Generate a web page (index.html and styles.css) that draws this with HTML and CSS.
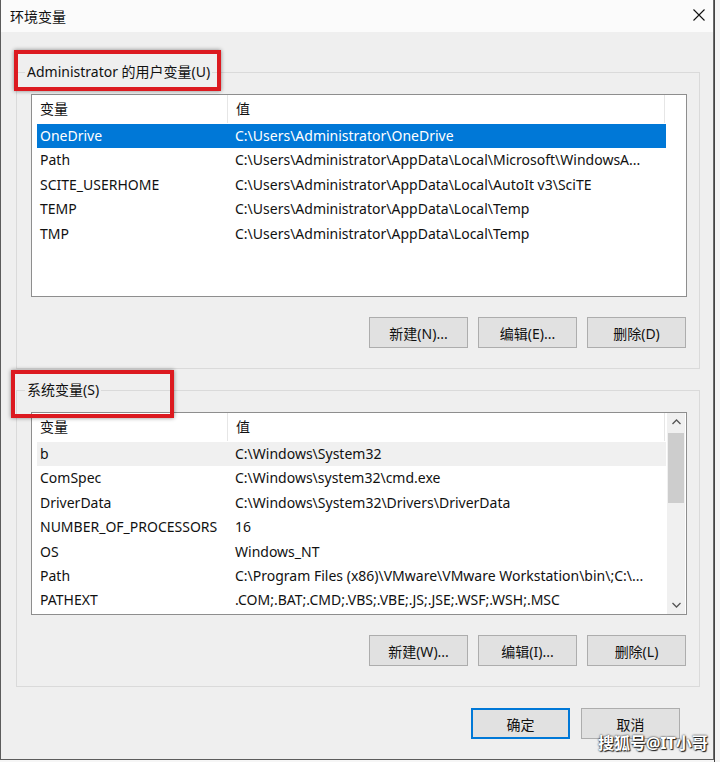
FILE: index.html
```html
<!DOCTYPE html>
<html lang="zh-CN">
<head>
  <meta charset="UTF-8" />
  <title>环境变量</title>
  <link rel="stylesheet" href="styles.css">
</head>
<body>
  <div class="window">
    <div class="titlebar">
      <span class="title">环境变量</span>
      <svg class="close" width="12" height="12" viewBox="0 0 12 12">
        <path d="M0.5 0.5 L11.5 11.5 M11.5 0.5 L0.5 11.5" stroke="#111" stroke-width="1.1" fill="none"/>
      </svg>
    </div>

    <div class="content">
      <fieldset class="group first">
        <legend>Administrator 的用户变量(U)</legend>
        <div class="list">
          <div class="list-main">
            <div class="list-head">
              <div class="col-name">变量</div>
              <div class="col-value">值</div>
            </div>
            <div class="row selected"><span class="name">OneDrive</span><span class="value">C:\Users\Administrator\OneDrive</span></div>
            <div class="row"><span class="name">Path</span><span class="value">C:\Users\Administrator\AppData\Local\Microsoft\WindowsA...</span></div>
            <div class="row"><span class="name">SCITE_USERHOME</span><span class="value">C:\Users\Administrator\AppData\Local\AutoIt v3\SciTE</span></div>
            <div class="row"><span class="name">TEMP</span><span class="value">C:\Users\Administrator\AppData\Local\Temp</span></div>
            <div class="row"><span class="name">TMP</span><span class="value">C:\Users\Administrator\AppData\Local\Temp</span></div>
          </div>
        </div>
        <div class="actions">
          <button>新建(N)...</button>
          <button>编辑(E)...</button>
          <button>删除(D)</button>
        </div>
      </fieldset>

      <fieldset class="group second">
        <legend>系统变量(S)</legend>
        <div class="list">
          <div class="list-main">
            <div class="list-head">
              <div class="col-name">变量</div>
              <div class="col-value">值</div>
            </div>
            <div class="row inactive"><span class="name">b</span><span class="value">C:\Windows\System32</span></div>
            <div class="row"><span class="name">ComSpec</span><span class="value">C:\Windows\system32\cmd.exe</span></div>
            <div class="row"><span class="name">DriverData</span><span class="value">C:\Windows\System32\Drivers\DriverData</span></div>
            <div class="row"><span class="name">NUMBER_OF_PROCESSORS</span><span class="value">16</span></div>
            <div class="row"><span class="name">OS</span><span class="value">Windows_NT</span></div>
            <div class="row"><span class="name">Path</span><span class="value">C:\Program Files (x86)\VMware\VMware Workstation\bin\;C:\...</span></div>
            <div class="row"><span class="name">PATHEXT</span><span class="value">.COM;.BAT;.CMD;.VBS;.VBE;.JS;.JSE;.WSF;.WSH;.MSC</span></div>
          </div>
          <div class="scrollbar">
            <div class="arrow">
              <svg width="9" height="6" viewBox="0 0 9 6"><path d="M0.5 5 L4.5 1 L8.5 5" stroke="#555" stroke-width="1.3" fill="none"/></svg>
            </div>
            <div class="thumb"></div>
            <div class="track"></div>
            <div class="arrow">
              <svg width="9" height="6" viewBox="0 0 9 6"><path d="M0.5 1 L4.5 5 L8.5 1" stroke="#555" stroke-width="1.3" fill="none"/></svg>
            </div>
          </div>
        </div>
        <div class="actions">
          <button>新建(W)...</button>
          <button>编辑(I)...</button>
          <button>删除(L)</button>
        </div>
      </fieldset>

      <div class="footer">
        <button class="default">确定</button>
        <button>取消</button>
      </div>
    </div>

    <!-- annotation boxes from the screenshot -->
    <div class="mark mark-user"></div>
    <div class="mark mark-system"></div>
    <div class="watermark">搜狐号@IT小哥</div>
  </div>
  <div class="side"></div>
</body>
</html>
```

FILE: styles.css
```css
body {
  margin: 0;
  display: flex;
  height: 762px;
  background: #f6f6f6;
  font-family: "Noto Sans", "Noto Sans CJK SC", sans-serif;
  font-size: 14px;
  color: #111;
  overflow: hidden;
}
.window {
  position: relative;
  width: 714px;
  height: 760px;
  box-sizing: border-box;
  border-left: 1px solid #5c5c5c;
  border-right: 1px solid #6a6a6a;
  border-bottom: 1px solid #5c5c5c;
  background: #efefef;
  display: flex;
  flex-direction: column;
}
.titlebar {
  height: 32px;
  background: #fbfbfb;
  display: flex;
  align-items: center;
  justify-content: space-between;
  padding: 0 8px 0 9px;
}
.title {
  font-size: 14px;
}
.close {
  margin-top: -2px;
}
.content {
  padding: 0 13px 0 15px;
  display: flex;
  flex-direction: column;
}
.group {
  margin: 0;
  border: 1px solid #dadada;
  padding: 12px 12px 20px 14px;
  min-width: 0;
}
.group.first {
  margin-top: 30px;
}
.group.second {
  margin-top: 11px;
}
.group legend {
  margin-left: -6px;
  padding: 0 2px;
  line-height: 20px;
}
.list {
  height: 203px;
  box-sizing: border-box;
  border: 1px solid #8e8e8e;
  background: #fff;
  display: flex;
}
.list-main {
  width: 634px;
  overflow: hidden;
}
.list-head {
  display: flex;
  height: 28px;
  margin-bottom: 1px;
}
.list-head > div {
  line-height: 28px;
  padding-left: 8px;
  box-sizing: border-box;
  border-right: 1px solid #e6e6e6;
}
.col-name {
  width: 196px;
}
.col-value {
  width: 437px;
}
.row {
  display: flex;
  height: 24.4px;
  line-height: 24.4px;
  margin-left: 5px;
  padding-left: 3px;
  white-space: nowrap;
}
.row .name {
  width: 195px;
  flex-shrink: 0;
}
.row.selected {
  background: #0078d7;
  color: #fff;
}
.row.inactive {
  background: #f0f0f0;
}
.scrollbar {
  width: 18px;
  margin-left: 1px;
  background: #f0f0f0;
  display: flex;
  flex-direction: column;
}
.arrow {
  height: 18px;
  display: flex;
  align-items: center;
  justify-content: center;
}
.thumb {
  height: 70px;
  margin: 2px 1px 0;
  background: #cdcdcd;
}
.track {
  flex: 1;
}
.actions {
  display: flex;
  justify-content: flex-end;
  gap: 10px;
  margin-top: 20px;
  margin-right: 1px;
}
button {
  width: 99px;
  height: 31px;
  font-family: inherit;
  font-size: 14px;
  color: #111;
  background: #e1e1e1;
  border: 1px solid #adadad;
  padding: 0;
}
.footer {
  display: flex;
  justify-content: flex-end;
  gap: 11px;
  margin-top: 21px;
  padding-right: 20px;
}
button.default {
  border: 1px solid #0078d7;
  box-shadow: inset 0 0 0 1px #0078d7;
}
.mark {
  position: absolute;
  border: 4px solid #dc1a20;
  box-shadow: 0 0 4px rgba(0, 0, 0, 0.45);
}
.mark-user {
  left: 13px;
  top: 50px;
  width: 199px;
  height: 33px;
}
.mark-system {
  left: 10px;
  top: 370px;
  width: 155px;
  height: 40px;
}
.watermark {
  position: absolute;
  left: 597px;
  top: 733px;
  white-space: nowrap;
  color: #fff;
  font-size: 16px;
  line-height: 20px;
  font-weight: bold;
  text-shadow: 0 0 2px #000, 1px 1px 1px #222;
}
.side {
  flex: 1;
  border-left: 1px solid #444;
  background: #f4f4f4;
}
```
